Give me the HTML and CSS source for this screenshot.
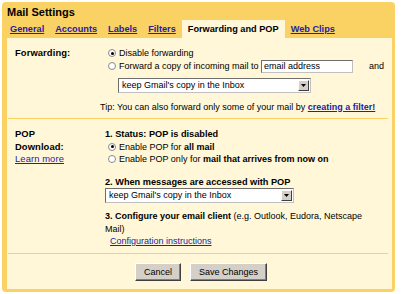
FILE: index.html
```html
<!DOCTYPE html>
<html lang="en">
  <head>
    <meta charset="UTF-8" />
    <title>Mail Settings</title>
    <link rel="stylesheet" href="styles.css">
  </head>
  <body>
    <div class="frame">
      <h1>Mail Settings</h1>
      <div class="tabs">
        <a href="#" class="tab">General</a>
        <a href="#" class="tab">Accounts</a>
        <a href="#" class="tab">Labels</a>
        <a href="#" class="tab">Filters</a>
        <span class="tab active">Forwarding and POP</span>
        <a href="#" class="tab">Web Clips</a>
      </div>

      <div class="panel">
        <div class="section forwarding">
          <div class="label">Forwarding:</div>
          <div class="content">
            <label class="radio-row"><input type="radio" name="fwd" checked>Disable forwarding</label>
            <label class="radio-row"><input type="radio" name="fwd">Forward a copy of incoming mail to <span class="textbox">email address</span><span class="and">and</span></label>
            <div class="select select-fwd">
              <span>keep Gmail's copy in the Inbox</span>
              <span class="arrow"><svg width="5" height="3" viewBox="0 0 5 3"><path d="M0 0h5L2.5 3z" fill="#000"/></svg></span>
            </div>
            <p class="tip">Tip: You can also forward only some of your mail by <a href="#" class="bold-link">creating a filter!</a></p>
          </div>
        </div>

        <div class="section pop">
          <div class="label">
            POP<br>Download:<br>
            <a href="#" class="plain-link">Learn more</a>
          </div>
          <div class="content">
            <div class="heading">1. Status: POP is disabled</div>
            <label class="radio-row"><input type="radio" name="pop" checked>Enable POP for <b>all mail</b></label>
            <label class="radio-row"><input type="radio" name="pop">Enable POP only for <b>mail that arrives from now on</b></label>

            <div class="heading step">2. When messages are accessed with POP</div>
            <div class="select select-pop">
              <span>keep Gmail's copy in the Inbox</span>
              <span class="arrow"><svg width="5" height="3" viewBox="0 0 5 3"><path d="M0 0h5L2.5 3z" fill="#000"/></svg></span>
            </div>

            <div class="configure">
              <div><b>3. Configure your email client</b> <span>(e.g. Outlook, Eudora, Netscape</span></div>
              <div>Mail)</div>
            </div>
            <a href="#" class="plain-link config-link">Configuration instructions</a>
          </div>
        </div>

        <div class="buttons">
          <button type="button">Cancel</button>
          <button type="button">Save Changes</button>
        </div>
      </div>
    </div>
  </body>
</html>
```

FILE: styles.css
```css
body {
  margin: 0;
  padding: 2px 6px 3px 2px;
  background: #fff;
  font-family: "Liberation Sans", Arial, sans-serif;
  font-size: 9px;
  color: #000;
}

.frame {
  background: #fad163;
  border-radius: 4px;
  padding: 0 3px 3px 5px;
}

h1 {
  margin: 0;
  padding: 3px 0 0 0;
  height: 14px;
  font-size: 11px;
  line-height: 14px;
}

.tabs {
  display: flex;
  align-items: flex-end;
  height: 19px;
  margin-left: -2px;
}

.tab {
  padding: 0 5px;
  margin-right: 1px;
  height: 18px;
  line-height: 18px;
  font-weight: bold;
  font-size: 9.2px;
  color: #2222a6;
  text-decoration: underline;
}

.tab.active {
  background: #fff7d7;
  color: #000;
  text-decoration: none;
  padding: 0 6px;
}

.panel {
  background: #fff7d7;
  padding: 0 4px 8px 1px;
}

.section {
  display: grid;
  grid-template-columns: 92px 1fr;
  border-bottom: 1px solid #fad163;
  line-height: 12.5px;
}

.label {
  font-weight: bold;
  padding-left: 7px;
  font-size: 9.4px;
  letter-spacing: 0.1px;
}

.forwarding {
  padding: 9px 0 5px 0;
}

.radio-row {
  display: block;
  white-space: nowrap;
}

.forwarding .radio-row {
  margin-left: 8px;
}

.pop .radio-row {
  margin-left: 3px;
}

input[type="radio"] {
  appearance: none;
  display: inline-block;
  vertical-align: -1px;
  width: 8px;
  height: 8px;
  margin: 0 3px 0 0;
  border: 1px solid #8a8a8a;
  border-radius: 50%;
  background: #fff;
  position: relative;
}

input[type="radio"]:checked::after {
  content: "";
  position: absolute;
  left: 1.5px;
  top: 1.5px;
  width: 3px;
  height: 3px;
  border-radius: 50%;
  background: #000;
}

.textbox {
  display: inline-block;
  width: 88px;
  height: 11px;
  line-height: 11px;
  padding-left: 2px;
  vertical-align: middle;
  background: #fff;
  border: 1px solid #c0c0c0;
  border-top-color: #6e6e6e;
  border-left-color: #6e6e6e;
}

.and {
  margin-left: 16px;
}

.select {
  display: flex;
  justify-content: space-between;
  align-items: center;
  height: 13px;
  background: #fff;
  border: 1px solid #c0c0c0;
  border-top-color: #6e6e6e;
  border-left-color: #6e6e6e;
  padding-left: 3px;
  white-space: nowrap;
}

.select-fwd {
  width: 188px;
  margin: 5px 0 0 18px;
}

.select-pop {
  width: 184px;
}

.arrow {
  display: flex;
  align-items: center;
  justify-content: center;
  width: 9px;
  height: 9px;
  margin-right: 1px;
  background: #d4d0c8;
  border: 1px solid #fff;
  border-right-color: #404040;
  border-bottom-color: #404040;
}

.tip {
  margin: 8px 0 0 0;
  white-space: nowrap;
}

.bold-link {
  font-weight: bold;
  color: #2222a6;
}

.plain-link {
  color: #2222a6;
  font-weight: normal;
}

.pop {
  padding: 9px 0 5px 0;
}

.pop .content {
  padding-left: 5px;
}

.heading {
  font-weight: bold;
  font-size: 9.2px;
}

.step {
  margin-top: 10px;
}

.configure {
  margin-top: 7px;
  white-space: nowrap;
}

.config-link {
  display: inline-block;
  margin-left: 5px;
}

.buttons {
  display: flex;
  justify-content: center;
  gap: 9px;
  padding-top: 9px;
  padding-left: 6px;
}

button {
  font-family: "Liberation Sans", Arial, sans-serif;
  font-size: 9px;
  height: 18px;
  padding: 0 8px;
  background: #d4d0c8;
  border: 1px solid #fff;
  border-right-color: #404040;
  border-bottom-color: #404040;
  box-shadow: inset -1px -1px 0 #808080;
}
```
